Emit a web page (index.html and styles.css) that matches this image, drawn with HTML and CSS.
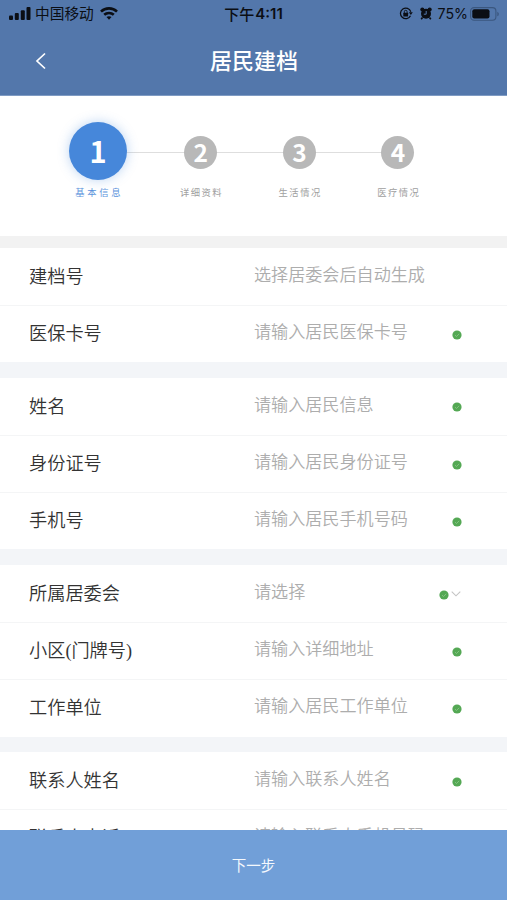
FILE: index.html
```html
<!DOCTYPE html>
<html lang="zh-CN">
<head>
<meta charset="utf-8">
<meta name="viewport" content="width=device-width, initial-scale=1">
<title>居民建档</title>
<link rel="stylesheet" href="styles.css">
</head>
<body>
<svg class="defs" width="0" height="0" aria-hidden="true">
  <symbol id="check" viewBox="0 0 10 10"><circle cx="5" cy="5" r="4.6" fill="#54a854"/><path d="M3 5.1l1.5 1.4L7.2 3.8" fill="none" stroke="#8fc98a" stroke-width=".8"/></symbol>
</svg>
<div class="app">
  <header class="header">
    <div class="status">
      <div class="status-left">
        <svg class="signal" width="22" height="13" viewBox="0 0 22 13"><rect x="0" y="8.5" width="4" height="4.5" rx="1"/><rect x="5.8" y="6" width="4" height="7" rx="1"/><rect x="11.8" y="3.2" width="4" height="9.8" rx="1"/><rect x="17.5" y="0" width="4" height="13" rx="1"/></svg>
        <span class="carrier">中国移动</span>
        <svg class="wifi" width="18" height="13" viewBox="0 0 18 13" fill="none" stroke="#0b0e14" stroke-width="2.6"><path d="M1 4.6C5.3.3 12.7.3 17 4.6"/><path d="M4.2 7.8c2.7-2.5 6.900-2.500 9.600 0"/><path d="M6.500 10l2.500 2.700 2.500-2.700c-1.400-1.100-3.600-1.100-5 0z" fill="#0b0e14" stroke="none"/></svg>
      </div>
      <div class="clock">下午<b>4:11</b></div>
      <div class="status-right">
        <svg width="14" height="13" viewBox="0 0 14 13"><path d="M11.500 8.800a5.300 5.300 0 1 1 .3-4.100" fill="none" stroke="#0b0e14" stroke-width="1.300"/><path d="M9.800 5.300h4L11.900 8z"/><rect x="4.300" y="5.800" width="4.800" height="3.600" rx=".5"/><path d="M5.300 6V4.700a1.400 1.400 0 0 1 2.800 0V6" fill="none" stroke="#0b0e14" stroke-width=".9"/></svg>
        <svg class="alarm" width="12" height="13" viewBox="0 0 12 13"><circle cx="6" cy="6.800" r="5"/><circle cx="2.300" cy="2.500" r="2"/><circle cx="9.700" cy="2.500" r="2"/><path d="M2.500 10.500l-1.300 1.800M9.500 10.500l1.300 1.800" stroke="#0b0e14" stroke-width="1.600"/><path d="M6.200 4v3.200H3.800" fill="none" stroke="#5377ab" stroke-width="1"/></svg>
        <span class="percent">75%</span>
        <svg class="battery" width="30" height="14" viewBox="0 0 30 14"><rect x=".6" y=".6" width="25.300" height="12.600" rx="3.500" fill="none" stroke="#3b577f" stroke-width="1.100"/><rect x="2.300" y="2.300" width="17.200" height="9.200" rx="2"/><path d="M27.300 4.700c2 .8 2 3.800 0 4.600z" fill="#3b577f"/></svg>
      </div>
    </div>
    <div class="nav">
      <svg class="back" width="12" height="18" viewBox="0 0 12 18"><path d="M10 1.500L2 9l8 7.500" fill="none" stroke="#fff" stroke-width="1.700"/></svg>
      <h1 class="title">居民建档</h1>
    </div>
  </header>

  <ol class="steps">
    <li class="step active"><span class="dot">1</span><span class="name">基本信息</span></li>
    <li class="step"><span class="dot">2</span><span class="name">详细资料</span></li>
    <li class="step"><span class="dot">3</span><span class="name">生活情况</span></li>
    <li class="step"><span class="dot">4</span><span class="name">医疗情况</span></li>
  </ol>

  <main class="form">
    <section class="group">
      <div class="row"><span class="label">建档号</span><span class="value">选择居委会后自动生成</span></div>
      <div class="row"><span class="label">医保卡号</span><span class="value">请输入居民医保卡号</span><svg class="check"><use href="#check"/></svg></div>
    </section>
    <section class="group">
      <div class="row"><span class="label">姓名</span><span class="value">请输入居民信息</span><svg class="check"><use href="#check"/></svg></div>
      <div class="row"><span class="label">身份证号</span><span class="value">请输入居民身份证号</span><svg class="check"><use href="#check"/></svg></div>
      <div class="row"><span class="label">手机号</span><span class="value">请输入居民手机号码</span><svg class="check"><use href="#check"/></svg></div>
    </section>
    <section class="group">
      <div class="row"><span class="label">所属居委会</span><span class="value">请选择</span><svg class="check"><use href="#check"/></svg><svg class="chevron" width="10" height="6" viewBox="0 0 10 6"><path d="M.7.700L5 4.800 9.300.700" fill="none" stroke="#c4c4c4" stroke-width="1.100"/></svg></div>
      <div class="row"><span class="label">小区(门牌号)</span><span class="value">请输入详细地址</span><svg class="check"><use href="#check"/></svg></div>
      <div class="row"><span class="label">工作单位</span><span class="value">请输入居民工作单位</span><svg class="check"><use href="#check"/></svg></div>
    </section>
    <section class="group">
      <div class="row"><span class="label">联系人姓名</span><span class="value">请输入联系人姓名</span><svg class="check"><use href="#check"/></svg></div>
      <div class="row"><span class="label">联系人电话</span><span class="value">请输入联系人手机号码</span><svg class="check"><use href="#check"/></svg></div>
    </section>
  </main>

  <button class="next" type="button">下一步</button>
</div>
</body>
</html>
```
FILE: styles.css
```css
* { box-sizing: border-box; }
body {
  margin: 0;
  font-family: "Noto Sans CJK SC", sans-serif;
  background: #fff;
}
.defs { position: absolute; }
.app {
  height: 900px;
  display: flex;
  flex-direction: column;
  overflow: hidden;
}

.header {
  flex: none;
  height: 96px;
  background: #5377ab;
  border-bottom: 1px solid #7f9bc3;
}
.status {
  height: 27px;
  display: grid;
  grid-template-columns: 1fr auto 1fr;
  align-items: center;
  padding: 0 7px 0 9px;
  color: #0b0e14;
  fill: #0b0e14;
}
.status-left, .status-right { display: flex; align-items: center; }
.status-right { justify-content: flex-end; }
.carrier { margin: -1px 6px 0 4px; font-size: 14.7px; line-height: 26px; }
.clock {
  display: flex;
  align-items: center;
  gap: 1px;
  margin-right: 2px;
  font-size: 15px;
  font-weight: 500;
  line-height: 26px;
}
.clock b { font: 600 15px/26px Inter, sans-serif; }
.alarm { margin-left: 7px; }
.percent { margin: 0 2px 0 6px; font: 14.2px/26px Inter, sans-serif; }

.nav {
  height: 68px;
  display: grid;
  grid-template-columns: 1fr auto 1fr;
  align-items: center;
}
.back { margin-left: 35px; }
.title {
  margin: -4px 0 0 1px;
  font-size: 22px;
  font-weight: 500;
  line-height: 32px;
  color: #fff;
}

.steps {
  flex: none;
  height: 140px;
  margin: 0;
  padding: 0 0 0 44.5px;
  list-style: none;
  display: grid;
  grid-template-columns: 107px repeat(3, 98.6px);
}
.step {
  display: grid;
  grid-template-rows: 113px 14px;
  justify-items: center;
  align-items: center;
  align-content: start;
  position: relative;
}
.step + .step::before {
  content: "";
  position: absolute;
  top: 56px;
  right: 50%;
  width: 100%;
  height: 1px;
  background: #dedede;
}
.dot {
  width: 33px;
  height: 33px;
  border-radius: 50%;
  background: #b8b8b8;
  color: #fff;
  font-size: 24.5px;
  font-weight: 700;
  line-height: 32px;
  text-align: center;
  z-index: 1;
}
.active .dot {
  width: 58px;
  height: 58px;
  margin-top: -4px;
  background: #4687da;
  box-shadow: 0 0 12px rgba(70, 135, 218, .36);
  font-size: 29px;
  line-height: 56px;
}
.name {
  margin: -49px -1.5px 0 0;
  font-size: 9.3px;
  line-height: 14px;
  letter-spacing: 1.5px;
  color: #a0a0a0;
}
.active .name {
  margin-right: -2.7px;
  letter-spacing: 2.7px;
  color: #5b93dc;
}

.form {
  flex: 1;
  min-height: 0;
  overflow: hidden;
  background: #f3f5f8;
  border-top: 12px solid #f2f2f2;
  display: flex;
  flex-direction: column;
  gap: 15.5px;
}
.group { flex: none; background: #fff; }
.row {
  height: 57.2px;
  display: flex;
  align-items: center;
  padding: 0 45px 0 29px;
}
.row + .row { border-top: 1.5px solid #f4f5f6; }
.label {
  width: 225px;
  margin-top: 1px;
  font-family: "Liberation Serif", "Noto Sans CJK SC", serif;
  font-size: 18.2px;
  font-weight: 350;
  line-height: 28px;
  color: #333;
}
.row + .row .label { margin-top: 0; }
.value {
  flex: 1;
  margin-top: -5px;
  font-size: 17.1px;
  font-weight: 350;
  line-height: 26px;
  color: #adadad;
}
.row + .row .value { margin-top: -7px; }
.check { width: 10px; height: 10px; margin-top: 2px; }
.chevron { margin: 0 -4px 0 2px; }
.row:has(.chevron) { padding-right: 50px; }

.next {
  flex: none;
  height: 70px;
  border: 0;
  padding: 0;
  background: #719fd8;
  color: #f4f8fd;
  font: 14.5px/22px "Noto Sans CJK SC", sans-serif;
}
```
